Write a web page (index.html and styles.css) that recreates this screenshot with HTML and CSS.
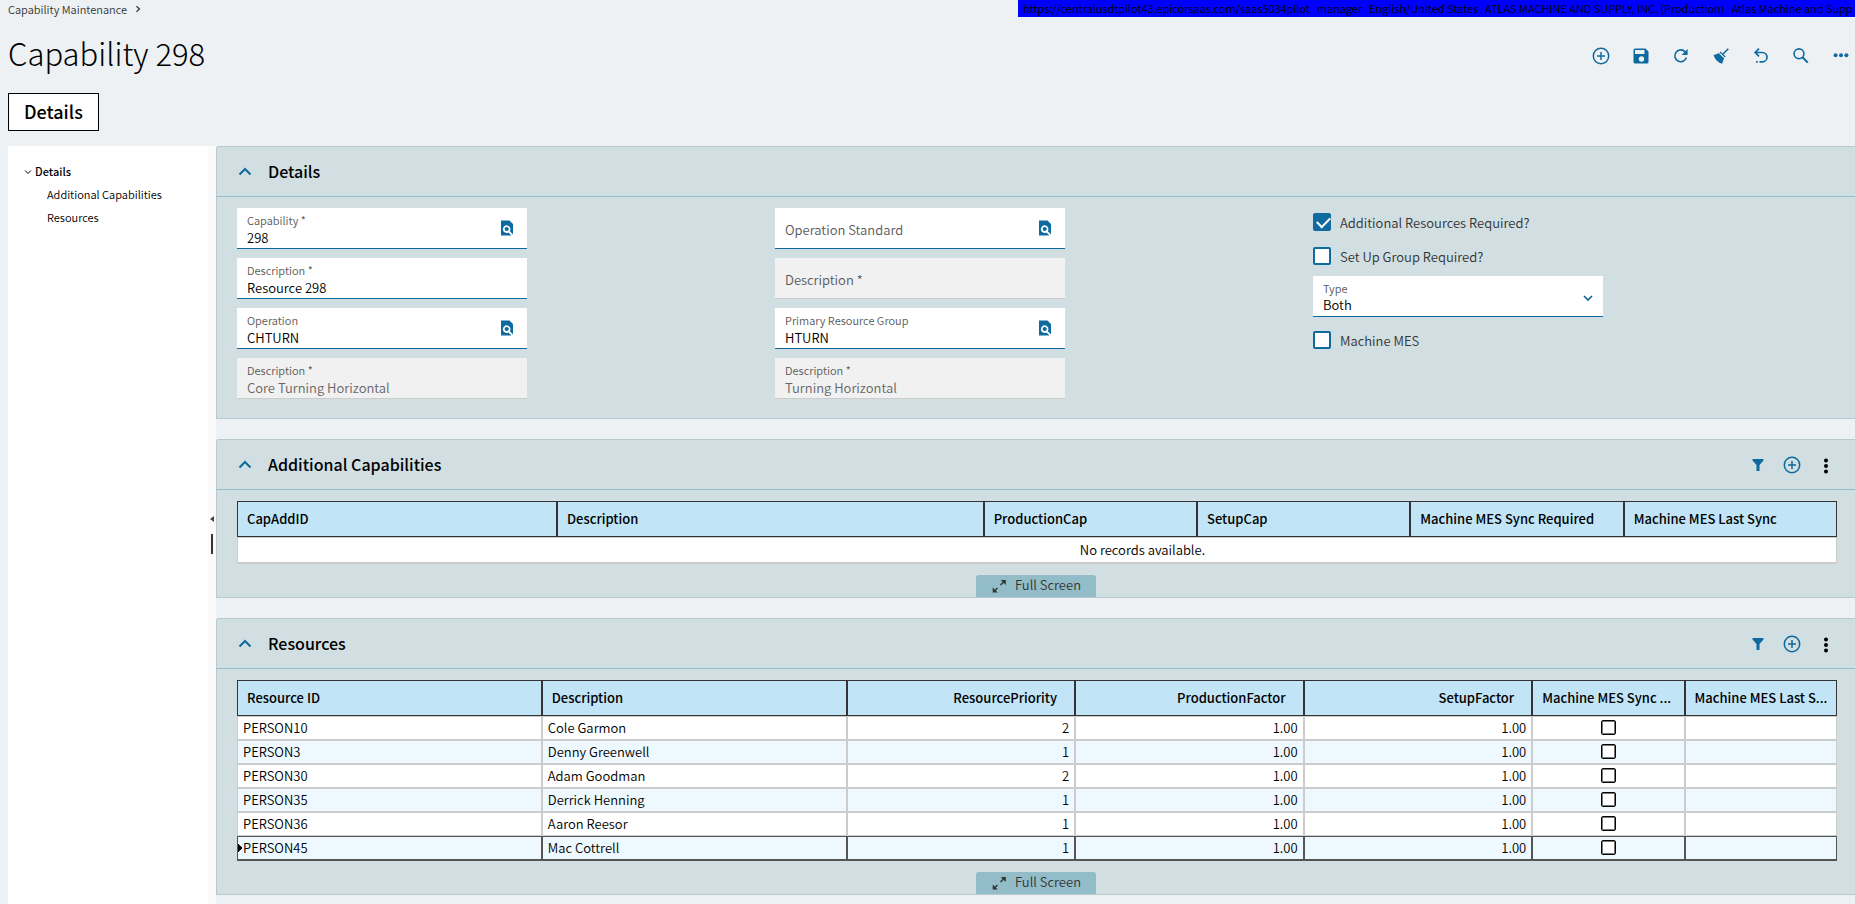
FILE: index.html
```html
<!DOCTYPE html>
<html lang="en">
<head>
<meta charset="utf-8">
<title>Capability Maintenance</title>
<link rel="stylesheet" href="styles.css">
</head>
<body>
<svg class="defs" aria-hidden="true">
  <symbol id="i-plus" viewBox="0 0 24 24"><circle cx="12" cy="12" r="7.7" fill="none" stroke="currentColor" stroke-width="1.5"/><path d="M12 8v8M8 12h8" stroke="currentColor" stroke-width="1.5"/></symbol>
  <symbol id="i-chev-up" viewBox="0 0 24 24"><path d="M6.500 14.500L12 9l5.500 5.500" fill="none" stroke="currentColor" stroke-width="2"/></symbol>
  <symbol id="i-filter" viewBox="0 0 24 24"><path d="M6.500 6h11v1.500L13.500 12v6h-3v-6L6.500 7.500z" fill="currentColor"/></symbol>
  <symbol id="i-kebab" viewBox="0 0 24 24"><circle cx="12" cy="7.500" r="2" fill="currentColor"/><circle cx="12" cy="13" r="2" fill="currentColor"/><circle cx="12" cy="18.500" r="2" fill="currentColor"/></symbol>
  <symbol id="i-lookup" viewBox="0 0 24 24"><path d="M6 4.500h8.500L18 8v10.500L14.800 15.300a3.800 3.800 0 1 0-1.300 1.200l3 3H6z" fill="currentColor"/><circle cx="11.700" cy="13" r="2.100" fill="currentColor"/></symbol>
  <symbol id="i-expand" viewBox="0 0 24 24"><path d="M13.500 12L17.500 8M10.500 15L7 18.500" stroke="currentColor" stroke-width="1.400"/><path d="M13.800 7h5v5zM10.700 19.500h-5v-5z" fill="currentColor"/></symbol>
</svg>

<header class="top">
  <nav class="crumbs"><a href="#">Capability Maintenance</a>
    <svg class="crumb-arrow" viewBox="0 0 8 8"><path d="M2.500 1.200L5.500 4 2.500 6.800" fill="none" stroke="currentColor" stroke-width="1.200"/></svg>
  </nav>
  <div class="banner"><span>https://centralusdtpilot43.epicorsaas.com/saas5034pilot</span><span>manager</span><span>English/United States</span><span>ATLAS MACHINE AND SUPPLY, INC. (Production)</span><span>Atlas Machine and Supp</span></div>
</header>

<div class="titlebar">
  <h1>Capability 298</h1>
  <div class="toolbar">
    <button type="button" class="icon" aria-label="New"><svg><use href="#i-plus"/></svg></button>
    <button type="button" class="icon" aria-label="Save"><svg viewBox="0 0 24 24"><path fill="currentColor" fill-rule="evenodd" d="M6 4.500h10.500l3 3V18A1.500 1.500 0 0 1 18 19.500H6A1.500 1.500 0 0 1 4.500 18V6A1.500 1.500 0 0 1 6 4.500zM6 6v4h9.500V6zM12.500 12.300a2.700 2.700 0 1 0 0 5.400 2.700 2.700 0 0 0 0-5.400z"/></svg></button>
    <button type="button" class="icon" aria-label="Refresh"><svg viewBox="0 0 24 24"><path d="M17.400 13.500a5.900 5.900 0 1 1-1.200-5.600" fill="none" stroke="currentColor" stroke-width="1.600"/><path d="M18.600 5v6h-6z" fill="currentColor"/></svg></button>
    <button type="button" class="icon" aria-label="Clear"><svg viewBox="0 0 24 24"><path d="M14 10l5.300-5.300" stroke="currentColor" stroke-width="1.600"/><path d="M10.500 8.200l1-.8 5.200 5.200-.9 1zM4.500 10.800c2-.2 3.600-.8 5.100-1.900l5.600 5.600c-1 1.700-1.700 3.500-1.900 5.300-3.900-.7-7.500-4.500-8.800-9z" fill="currentColor"/></svg></button>
    <button type="button" class="icon" aria-label="Undo"><svg viewBox="0 0 24 24"><path d="M10 4.700L6.200 8.500l3.800 3.800M6.500 8.500h6.800a4.700 4.700 0 0 1 0 9.400h-2.800M8.700 17.900H7" fill="none" stroke="currentColor" stroke-width="1.700"/></svg></button>
    <button type="button" class="icon" aria-label="Search"><svg viewBox="0 0 24 24"><circle cx="10" cy="9.800" r="4.900" fill="none" stroke="currentColor" stroke-width="1.600"/><path d="M13.500 13.300l5.300 5.300" stroke="currentColor" stroke-width="2"/></svg></button>
    <button type="button" class="icon" aria-label="More"><svg viewBox="0 0 24 24"><g fill="currentColor"><circle cx="6.600" cy="11.300" r="2"/><circle cx="12" cy="11.300" r="2"/><circle cx="17.400" cy="11.300" r="2"/></g></svg></button>
  </div>
</div>

<div class="tabs"><button type="button" class="tab">Details</button></div>

<div class="body">
  <nav class="side">
    <a class="parent" href="#details"><svg viewBox="0 0 8 8"><path d="M1 2.500L4 5.500l3-3" fill="none" stroke="currentColor"/></svg>Details</a>
    <a href="#addl">Additional Capabilities</a>
    <a href="#res">Resources</a>
  </nav>
  <div class="splitter"><svg viewBox="0 0 4 6"><path d="M0 3l4-3v6z" fill="#444"/></svg><i></i></div>

  <main>
    <section class="panel" id="details">
      <header class="panel-head"><button type="button" class="icon" aria-label="Collapse"><svg><use href="#i-chev-up"/></svg></button><h2>Details</h2></header>
      <form class="form">
        <div class="col">
          <div class="field"><label for="f1">Capability *</label><input id="f1" value="298"><button type="button" class="icon" aria-label="Look up"><svg><use href="#i-lookup"/></svg></button></div>
          <div class="field"><label for="f2">Description *</label><input id="f2" value="Resource 298"></div>
          <div class="field"><label for="f3">Operation</label><input id="f3" value="CHTURN"><button type="button" class="icon" aria-label="Look up"><svg><use href="#i-lookup"/></svg></button></div>
          <div class="field"><label for="f4">Description *</label><input id="f4" value="Core Turning Horizontal" disabled></div>
        </div>
        <div class="col">
          <div class="field empty"><label for="f5">Operation Standard</label><input id="f5"><button type="button" class="icon" aria-label="Look up"><svg><use href="#i-lookup"/></svg></button></div>
          <div class="field empty"><label for="f6">Description *</label><input id="f6" disabled></div>
          <div class="field"><label for="f7">Primary Resource Group</label><input id="f7" value="HTURN"><button type="button" class="icon" aria-label="Look up"><svg><use href="#i-lookup"/></svg></button></div>
          <div class="field"><label for="f8">Description *</label><input id="f8" value="Turning Horizontal" disabled></div>
        </div>
        <div class="col checks">
          <label class="check"><input type="checkbox" checked><span>Additional Resources Required?</span></label>
          <label class="check"><input type="checkbox"><span>Set Up Group Required?</span></label>
          <div class="field pick"><label for="f9">Type</label><select id="f9"><option>Both</option></select><svg class="drop" viewBox="0 0 24 24"><path d="M8 12l4 4 4-4" fill="none" stroke="currentColor" stroke-width="1.700"/></svg></div>
          <label class="check"><input type="checkbox"><span>Machine MES</span></label>
        </div>
      </form>
    </section>

    <section class="panel" id="addl">
      <header class="panel-head"><button type="button" class="icon" aria-label="Collapse"><svg><use href="#i-chev-up"/></svg></button><h2>Additional Capabilities</h2>
        <div class="tools"><button type="button" class="icon" aria-label="Filter"><svg><use href="#i-filter"/></svg></button><button type="button" class="icon" aria-label="Add"><svg><use href="#i-plus"/></svg></button><button type="button" class="icon dark" aria-label="Menu"><svg><use href="#i-kebab"/></svg></button></div></header>
      <div class="grid-wrap">
        <table class="caps">
          <thead><tr><th class="w3">CapAddID</th><th class="w4">Description</th><th class="w2">ProductionCap</th><th class="w2">SetupCap</th><th class="w2">Machine MES Sync Required</th><th class="w2">Machine MES Last Sync</th></tr></thead>
          <tbody><tr class="none"><td colspan="6">No records available.</td></tr></tbody>
        </table>
      </div>
      <button type="button" class="full"><svg><use href="#i-expand"/></svg>Full Screen</button>
    </section>

    <section class="panel" id="res">
      <header class="panel-head"><button type="button" class="icon" aria-label="Collapse"><svg><use href="#i-chev-up"/></svg></button><h2>Resources</h2>
        <div class="tools"><button type="button" class="icon" aria-label="Filter"><svg><use href="#i-filter"/></svg></button><button type="button" class="icon" aria-label="Add"><svg><use href="#i-plus"/></svg></button><button type="button" class="icon dark" aria-label="Menu"><svg><use href="#i-kebab"/></svg></button></div></header>
      <div class="grid-wrap">
        <table class="resources">
          <thead><tr><th class="r4">Resource ID</th><th class="r4">Description</th><th class="r3 num">ResourcePriority</th><th class="r3 num">ProductionFactor</th><th class="r3 num">SetupFactor</th><th class="r2">Machine MES Sync ...</th><th class="r2">Machine MES Last S...</th></tr></thead>
          <tbody>
            <tr><td>PERSON10</td><td>Cole Garmon</td><td class="num">2</td><td class="num">1.00</td><td class="num">1.00</td><td class="tick"><input type="checkbox" aria-label="Sync required"></td><td></td></tr>
            <tr><td>PERSON3</td><td>Denny Greenwell</td><td class="num">1</td><td class="num">1.00</td><td class="num">1.00</td><td class="tick"><input type="checkbox" aria-label="Sync required"></td><td></td></tr>
            <tr><td>PERSON30</td><td>Adam Goodman</td><td class="num">2</td><td class="num">1.00</td><td class="num">1.00</td><td class="tick"><input type="checkbox" aria-label="Sync required"></td><td></td></tr>
            <tr><td>PERSON35</td><td>Derrick Henning</td><td class="num">1</td><td class="num">1.00</td><td class="num">1.00</td><td class="tick"><input type="checkbox" aria-label="Sync required"></td><td></td></tr>
            <tr><td>PERSON36</td><td>Aaron Reesor</td><td class="num">1</td><td class="num">1.00</td><td class="num">1.00</td><td class="tick"><input type="checkbox" aria-label="Sync required"></td><td></td></tr>
            <tr class="current"><td>PERSON45</td><td>Mac Cottrell</td><td class="num">1</td><td class="num">1.00</td><td class="num">1.00</td><td class="tick"><input type="checkbox" aria-label="Sync required"></td><td></td></tr>
          </tbody>
        </table>
      </div>
      <button type="button" class="full"><svg><use href="#i-expand"/></svg>Full Screen</button>
    </section>
  </main>
</div>
</body>
</html>
```
FILE: styles.css
```css
* { box-sizing: border-box; }
body {
  margin: 0;
  min-height: 100vh;
  display: flex;
  flex-direction: column;
  overflow-x: hidden;
  background: #edf1f4;
  color: #000;
  font: 350 13px/20px "Noto Sans CJK SC", "Noto Sans", sans-serif;
}
button, input, select { font: inherit; color: inherit; margin: 0; padding: 0; border: 0; background: none; border-radius: 0; }
a { color: inherit; text-decoration: none; }
h1, h2 { margin: 0; }
.defs { position: absolute; width: 0; height: 0; }
.icon { width: 24px; height: 24px; flex: none; color: #0f6a9f; }
.icon svg { display: block; width: 24px; height: 24px; }
.icon.dark { color: #000; }

.top { display: flex; justify-content: space-between; height: 18px; }
.crumbs { display: flex; align-items: center; gap: 7px; padding-left: 8px; font-size: 11px; color: #333; }
.crumb-arrow { width: 8px; height: 8px; }
.banner {
  display: flex;
  gap: 7px;
  width: 837px;
  height: 17px;
  padding-left: 5px;
  overflow: hidden;
  white-space: nowrap;
  background: #00f;
  font-size: 11px;
  line-height: 16px;
}
.titlebar { display: flex; align-items: center; justify-content: space-between; height: 72px; padding: 0 2px 0 8px; }
h1 { padding-bottom: 3px; font-size: 31px; line-height: 40px; font-weight: 300; }
.toolbar { display: flex; gap: 16px; padding-top: 3px; }
.tabs { padding: 3px 8px 15px; }
.tab { display: block; height: 38px; padding: 0 15px 2px; border: 1px solid #000; background: #fff; font-size: 18px; font-weight: 500; }

.body { flex: 1; display: flex; }
.side { width: 200px; margin-left: 8px; padding-top: 14px; background: #fff; font-size: 11px; line-height: 23px; flex: none; }
.side a { display: block; padding-left: 39px; }
.side .parent { display: flex; align-items: center; gap: 3px; padding-left: 16px; font-weight: 500; }
.side svg { width: 8px; height: 8px; }
.splitter {
  width: 8px;
  flex: none;
  display: flex;
  flex-direction: column;
  align-items: center;
  justify-content: center;
  gap: 12px;
  padding-top: 20px;
  background: #fafafa;
}
.splitter svg { width: 4px; height: 6px; }
.splitter i { width: 2px; height: 20px; background: #333; }
main { flex: 1; min-width: 0; display: flex; flex-direction: column; gap: 20px; padding-bottom: 9px; }

.panel { border: 1px solid #b9cacf; border-right: 0; border-radius: 3px 0 0 0; background: #d1dee2; }
.panel-head { display: flex; align-items: center; gap: 11px; height: 50px; padding: 0 17px 0 16px; border-bottom: 1px solid #92bfcb; }
h2 { padding-bottom: 2px; font-size: 16px; font-weight: 500; }
.tools { display: flex; align-items: center; gap: 10px; margin-left: auto; }

.form { display: grid; grid-template-columns: repeat(3, 1fr); padding: 11px 4px 19px 20px; }
.col { display: flex; flex-direction: column; gap: 9px; max-width: 290px; }
.field { display: grid; grid-template-columns: 1fr 24px; padding-right: 8px; background: #fff; border-bottom: 1px solid #0f6a9f; height: 41px; }
.field label { grid-area: 1 / 1; align-self: start; padding: 2px 10px 0; font-size: 11px; line-height: 20px; color: #595959; z-index: 1; }
.field input, .field select { grid-area: 1 / 1 / 2 / 3; width: 100%; height: 40px; padding: 18px 10px 0; outline: 0; line-height: 20px; appearance: none; }
.field .icon, .field .drop { grid-area: 1 / 2; align-self: center; z-index: 1; }
.field .drop { width: 24px; height: 24px; color: #0f6a9f; pointer-events: none; }
.field.pick { padding-right: 3px; }
.field.empty label { padding-top: 12px; font-size: 13px; }
.field:has(:disabled) { background: #f1f1f1; border-color: #ccc; }
.field :disabled { color: #666; opacity: 1; }
.checks { gap: 6px; }
.checks .field { margin-bottom: 3px; }
.check { display: flex; align-items: center; gap: 9px; height: 28px; color: #333; }
.check span { padding-top: 2px; }
.check input { appearance: none; width: 18px; height: 18px; border: 2px solid #0f6a9f; border-radius: 2px; background: #fff; display: grid; }
.check input:checked { background: #0f6a9f; }
.check input:checked::before { content: ""; width: 11px; height: 6px; margin: 2px; border: solid #fff; border-width: 0 0 2px 2px; rotate: -45deg; }

.grid-wrap { padding: 11px 18px 11px 20px; }
table { width: 100%; table-layout: fixed; border-collapse: separate; border-spacing: 0; }
th, td { overflow: hidden; white-space: nowrap; text-overflow: ellipsis; }
th { height: 36px; padding: 0 4px 0 9px; border: 1px solid #333; background: #c1e4f6; font-weight: 500; text-align: left; }
td { height: 24px; padding: 0 5px; border: 1px solid #ccc; background: #fff; }
.resources tr:nth-child(even) td { background-color: #edf9ff; }
th.num { padding-right: 17px; }
.num { text-align: right; }
.none td { height: 27px; padding-left: 216px; text-align: center; border-bottom-width: 2px; }
.w2 { width: 13.3333%; }
.w3 { width: 20%; }
.w4 { width: 26.6667%; }
.r2 { width: 9.5238%; }
.r3 { width: 14.2857%; }
.r4 { width: 19.0476%; }
.tick input { appearance: none; display: block; width: 15px; height: 15px; margin: 0 auto 1px; border: 1px solid #000; border-radius: 2px; background: #fff; box-shadow: inset 0 0 0 1px #777; }
.current td { height: 25px; border-color: #555; border-bottom-width: 2px; }
.resources .current td:first-child {
  background-image: linear-gradient(to bottom left, transparent 50%, #000 51%), linear-gradient(to top left, transparent 50%, #000 51%);
  background-position: 0 6px, 0 11px;
  background-size: 5px 5px;
  background-repeat: no-repeat;
}
.full { display: flex; align-items: center; justify-content: center; gap: 4px; width: 120px; height: 22px; margin: 0 auto; padding: 0 4px 2px 0; border-radius: 3px 3px 0 0; background: #92bcc8; color: #333; }
.full svg { width: 24px; height: 24px; }
```
